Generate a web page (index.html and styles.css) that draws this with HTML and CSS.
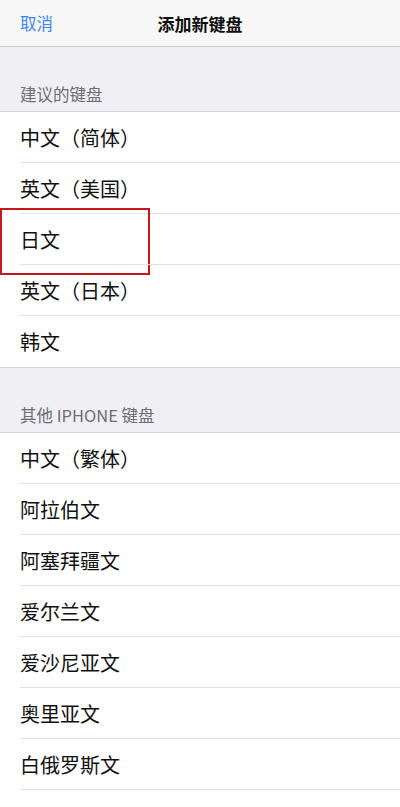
FILE: index.html
```html
<!DOCTYPE html>
<html lang="zh-CN">

<head>
    <meta charset="UTF-8">
    <meta name="viewport" content="width=device-width, initial-scale=1.0">
    <title>添加新键盘</title>
    <link rel="stylesheet" href="styles.css">
</head>

<body>

    <!-- Barra de navegación -->
    <header class="nav-bar">
        <span class="nav-cancel">取消</span>
        <h1 class="nav-title">添加新键盘</h1>
    </header>

    <!-- Grupo: sugeridos -->
    <div class="group-header"><span>建议的键盘</span></div>
    <ul class="list">
        <li class="row">中文（简体）</li>
        <li class="row">英文（美国）</li>
        <li class="row row-marked">日文</li>
        <li class="row">英文（日本）</li>
        <li class="row">韩文</li>
    </ul>

    <!-- Grupo: otros -->
    <div class="group-header"><span>其他 IPHONE 键盘</span></div>
    <ul class="list list-open">
        <li class="row">中文（繁体）</li>
        <li class="row">阿拉伯文</li>
        <li class="row">阿塞拜疆文</li>
        <li class="row">爱尔兰文</li>
        <li class="row">爱沙尼亚文</li>
        <li class="row">奥里亚文</li>
        <li class="row">白俄罗斯文</li>
        <li class="row"></li>
    </ul>

</body>

</html>
```

FILE: styles.css
```css
/* Reset */
* {
    margin: 0;
    padding: 0;
    box-sizing: border-box;
}

body {
    width: 400px;
    height: 807px;
    overflow: hidden;
    background-color: #ffffff;
    font-family: "Noto Sans CJK SC", "Noto Sans", sans-serif;
    color: #111111;
}

/* Barra superior */
.nav-bar {
    height: 47px;
    position: relative;
    display: flex;
    align-items: center;
    justify-content: center;
    background-color: #f7f7f8;
    border-bottom: 1px solid #c9c9ce;
}

.nav-cancel {
    position: absolute;
    left: 20px;
    top: 50%;
    transform: translateY(-50%);
    font-size: 16.5px;
    color: #3f86f3;
}

.nav-title {
    font-size: 17px;
    font-weight: 600;
    color: #0f0f0f;
}

/* Cabecera de grupo */
.group-header {
    height: 65px;
    display: flex;
    align-items: flex-end;
    padding: 0 20px 7px;
    background-color: #efeff4;
    border-bottom: 1px solid #d4d4d8;
    font-size: 16.5px;
    line-height: 20px;
    color: #6d6d72;
}

/* Lista */
.list {
    list-style: none;
    background-color: #ffffff;
    border-bottom: 1px solid #d4d4d8;
}

.list-open {
    border-bottom: none;
}

.row {
    position: relative;
    height: 51px;
    display: flex;
    align-items: center;
    padding-left: 20px;
    font-size: 20px;
}

.row::after {
    content: '';
    position: absolute;
    left: 20px;
    right: 0;
    bottom: 0;
    height: 1px;
    background-color: #e2e2e4;
}

.list .row:last-child::after {
    display: none;
}

.list-open .row:last-child::after {
    display: block;
}

/* Recuadro rojo de marca */
.row-marked::before {
    content: '';
    position: absolute;
    left: 0;
    top: -6px;
    width: 146px;
    height: 63px;
    border: 2px solid #c8161d;
}
```
